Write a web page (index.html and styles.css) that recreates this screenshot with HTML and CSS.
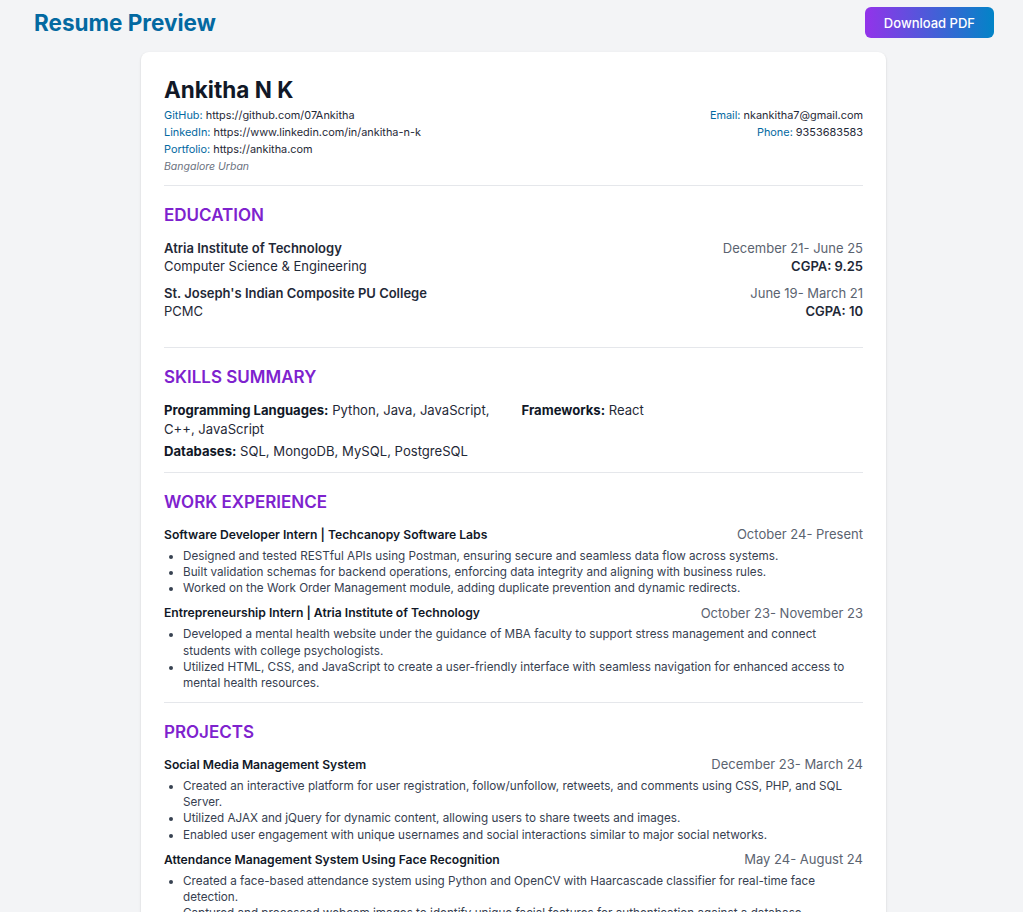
FILE: index.html
```html
<!DOCTYPE html>
<html lang="en">
<head>
<meta charset="utf-8">
<title>Resume Preview</title>
<link rel="stylesheet" href="styles.css">
</head>
<body>
<header class="topbar">
  <h1 class="page-title">Resume Preview</h1>
  <button class="download-btn">Download PDF</button>
</header>
<main class="resume">
  <section class="head">
    <h2 class="name">Ankitha N K</h2>
    <div class="contacts">
      <div class="contact-col">
        <div><span class="label">GitHub:</span> https://github.com/07Ankitha</div>
        <div><span class="label">LinkedIn:</span> https://www.linkedin.com/in/ankitha-n-k</div>
        <div><span class="label">Portfolio:</span> https://ankitha.com</div>
        <div class="location">Bangalore Urban</div>
      </div>
      <div class="contact-col right">
        <div><span class="label">Email:</span> nkankitha7@gmail.com</div>
        <div><span class="label">Phone:</span> 9353683583</div>
      </div>
    </div>
  </section>

  <section class="section">
    <h3 class="section-title">EDUCATION</h3>
    <div class="edu">
      <div class="edu-left">
        <div class="strong">Atria Institute of Technology</div>
        <div>Computer Science &amp; Engineering</div>
      </div>
      <div class="edu-right">
        <div class="date">December 21- June 25</div>
        <div class="strong">CGPA: 9.25</div>
      </div>
    </div>
    <div class="edu">
      <div class="edu-left">
        <div class="strong">St. Joseph's Indian Composite PU College</div>
        <div>PCMC</div>
      </div>
      <div class="edu-right">
        <div class="date">June 19- March 21</div>
        <div class="strong">CGPA: 10</div>
      </div>
    </div>
  </section>

  <section class="section">
    <h3 class="section-title">SKILLS SUMMARY</h3>
    <div class="skills">
      <div><span class="skill-label">Programming Languages:</span> Python, Java, JavaScript, C++, JavaScript</div>
      <div><span class="skill-label">Frameworks:</span> React</div>
      <div><span class="skill-label">Databases:</span> SQL, MongoDB, MySQL, PostgreSQL</div>
    </div>
  </section>

  <section class="section">
    <h3 class="section-title">WORK EXPERIENCE</h3>
    <div class="entry">
      <div class="entry-head">
        <div class="entry-title">Software Developer Intern | Techcanopy Software Labs</div>
        <div class="date">October 24- Present</div>
      </div>
      <ul class="bullets">
        <li>Designed and tested RESTful APIs using Postman, ensuring secure and seamless data flow across systems.</li>
        <li>Built validation schemas for backend operations, enforcing data integrity and aligning with business rules.</li>
        <li>Worked on the Work Order Management module, adding duplicate prevention and dynamic redirects.</li>
      </ul>
    </div>
    <div class="entry">
      <div class="entry-head">
        <div class="entry-title">Entrepreneurship Intern | Atria Institute of Technology</div>
        <div class="date">October 23- November 23</div>
      </div>
      <ul class="bullets">
        <li>Developed a mental health website under the guidance of MBA faculty to support stress management and connect students with college psychologists.</li>
        <li>Utilized HTML, CSS, and JavaScript to create a user-friendly interface with seamless navigation for enhanced access to mental health resources.</li>
      </ul>
    </div>
  </section>

  <section class="section">
    <h3 class="section-title">PROJECTS</h3>
    <div class="entry">
      <div class="entry-head">
        <div class="entry-title">Social Media Management System</div>
        <div class="date">December 23- March 24</div>
      </div>
      <ul class="bullets">
        <li>Created an interactive platform for user registration, follow/unfollow, retweets, and comments using CSS, PHP, and SQL Server.</li>
        <li>Utilized AJAX and jQuery for dynamic content, allowing users to share tweets and images.</li>
        <li>Enabled user engagement with unique usernames and social interactions similar to major social networks.</li>
      </ul>
    </div>
    <div class="entry">
      <div class="entry-head">
        <div class="entry-title">Attendance Management System Using Face Recognition</div>
        <div class="date">May 24- August 24</div>
      </div>
      <ul class="bullets">
        <li>Created a face-based attendance system using Python and OpenCV with Haarcascade classifier for real-time face detection.</li>
        <li>Captured and processed webcam images to identify unique facial features for authentication against a database.</li>
        <li>Stored attendance records in a database with timestamps for easy tracking and reporting.</li>
      </ul>
    </div>
  </section>
</main>
</body>
</html>
```

FILE: styles.css
```css
* { box-sizing: border-box; }

body {
  margin: 0;
  background: #f3f4f6;
  font-family: Inter, "Noto Sans", "Liberation Sans", sans-serif;
  color: #1f2937;
}

.topbar {
  display: flex;
  justify-content: space-between;
  align-items: center;
  padding: 7px 29px 0 34px;
  margin-bottom: 14px;
}

.page-title {
  margin: 0;
  font-size: 22.5px;
  line-height: 31px;
  font-weight: 700;
  color: #0369a1;
}

.download-btn {
  height: 31px;
  padding: 0 19px;
  border: 0;
  border-radius: 6px;
  background: linear-gradient(90deg, #9333ea, #0284c7);
  color: #fff;
  font-family: inherit;
  font-size: 13px;
  font-weight: 500;
}

.resume {
  width: 745px;
  margin: 0 0 0 141px;
  background: #fff;
  border-radius: 8px;
  box-shadow: 0 1px 3px rgba(0, 0, 0, 0.1), 0 1px 2px rgba(0, 0, 0, 0.06);
  padding: 21px 23px 24px;
}

.head {
  padding-bottom: 10px;
  border-bottom: 1px solid #e5e7eb;
}

.name {
  margin: 1px 0 1px;
  font-size: 22.5px;
  line-height: 32px;
  font-weight: 700;
  color: #111827;
}

.contacts {
  display: flex;
  justify-content: space-between;
  font-size: 10.9px;
  line-height: 17px;
  color: #1f2937;
}

.contact-col.right { text-align: right; }

.label { color: #0369a1; }

.location {
  font-style: italic;
  color: #6b7280;
  font-size: 10.5px;
}

.section {
  padding-top: 17px;
  padding-bottom: 11px;
  border-bottom: 1px solid #e5e7eb;
}

.section:last-child { border-bottom: 0; }

.section-title {
  margin: 0 0 12px;
  font-size: 17px;
  line-height: 24px;
  font-weight: 600;
  color: #7e22ce;
}

.strong { font-weight: 600; color: #1f2937; }

.edu {
  display: flex;
  justify-content: space-between;
  font-size: 13px;
  line-height: 18px;
  color: #1f2937;
  margin-bottom: 9px;
}

.edu:last-child { margin-bottom: 16px; }

.edu-right { text-align: right; }

.date {
  color: #5b6370;
  font-size: 13px;
}

.skills {
  display: grid;
  grid-template-columns: 1fr 1fr;
  column-gap: 16px;
  row-gap: 3px;
  font-size: 13.1px;
  line-height: 19px;
  color: #1f2937;
}

.skill-label { font-weight: 700; color: #111827; }

.section-title + .entry { margin-top: -2px; }

.entry { margin-bottom: 6.5px; }
.entry:last-child { margin-bottom: 0; }

.entry-head {
  display: flex;
  justify-content: space-between;
  align-items: center;
  height: 20px;
}

.entry-title {
  font-size: 12.15px;
  font-weight: 600;
  color: #111827;
}

.bullets {
  margin: 3.5px 0 0;
  padding-left: 19px;
  font-size: 11.7px;
  line-height: 16.25px;
  color: #374151;
}
```
